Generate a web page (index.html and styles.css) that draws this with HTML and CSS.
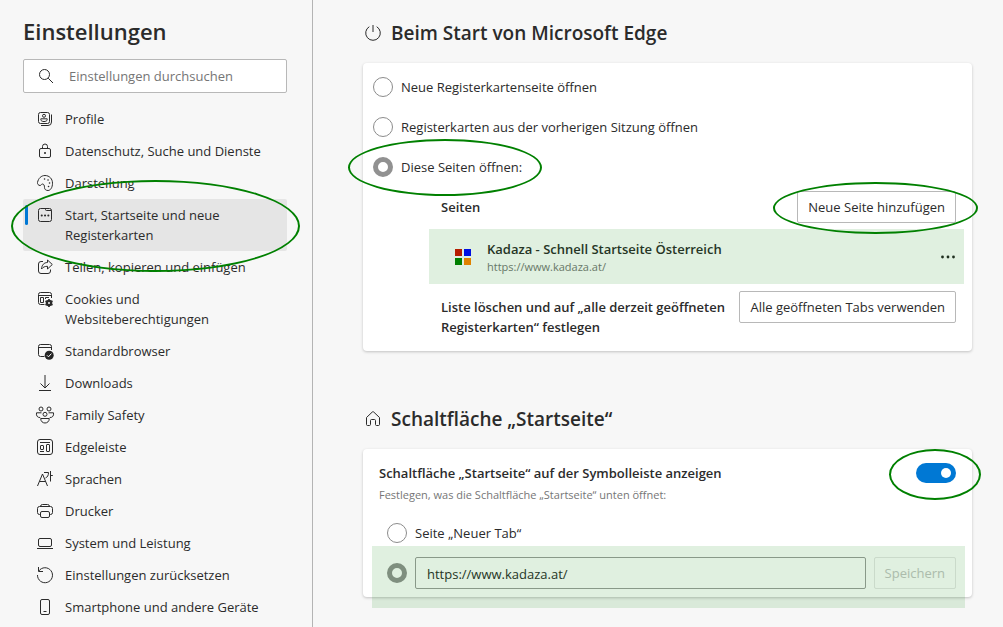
FILE: index.html
```html
<!DOCTYPE html>
<html lang="de">
<head>
<meta charset="utf-8">
<meta name="viewport" content="width=device-width, initial-scale=1">
<title>Einstellungen</title>
<link rel="stylesheet" href="styles.css">
</head>
<body>
<div class="layout">
  <aside class="sidebar">
    <h1 class="sidebar-title">Einstellungen</h1>
    <div class="search">
      <svg class="icon" viewBox="0 0 16 16" aria-hidden="true"><circle cx="6.5" cy="6.5" r="5"/><path d="M10.200 10.200 15 15"/></svg>
      <input class="search-input" type="search" placeholder="Einstellungen durchsuchen" aria-label="Einstellungen durchsuchen">
    </div>
    <nav class="nav">
      <a class="nav-item" href="#"><svg class="icon" viewBox="0 0 16 16" aria-hidden="true"><rect x="1.500" y="1.500" width="11" height="11" rx="2"/><circle cx="7" cy="4.800" r="1.500"/><path d="M3.800 7.800h6.400v.8c0 2.600-6.400 2.600-6.400 0zM14.500 3.500v7.500a3.500 3.500 0 0 1-3.500 3.500H4"/></svg><span>Profile</span></a>
      <a class="nav-item" href="#"><svg class="icon" viewBox="0 0 16 16" aria-hidden="true"><rect x="2.500" y="5.500" width="11" height="9" rx="1.500"/><path d="M5.500 5.500v-2a2.500 2.500 0 0 1 5 0v2"/><circle class="solid" cx="8" cy="10" r="1"/></svg><span>Datenschutz, Suche und Dienste</span></a>
      <a class="nav-item" href="#"><svg class="icon" viewBox="0 0 16 16" aria-hidden="true"><path d="M.5 7.500C1.300 3.300 4.300.5 8 .5c4.500 0 7.500 3.500 7.500 7.700 0 4.300-2 7.300-4.500 7.300-2.200 0-3.500-1.200-3.500-3 0-2-.6-3.500-2-3.500-1.200 0-1.200 1.500-2.500 1.500C1.500 10.500.2 9 .5 7.500z"/><path class="dots dots-small" d="M7.500 4h.1M11 5h.1M12.500 8h.1M11.500 11.500h.1"/></svg><span>Darstellung</span></a>
      <a class="nav-item nav-item-active" href="#" aria-current="page"><svg class="icon" viewBox="0 0 16 16" aria-hidden="true"><rect x="1.500" y="1.500" width="13" height="13" rx="2"/><path d="M8.500 1.500v1a1 1 0 0 0 1 1h5"/><path class="dots" d="M4.700 8.500h.1M8 8.500h.1M11.300 8.500h.1"/></svg><span>Start, Startseite und neue Registerkarten</span><span class="ring ring-nav"></span></a>
      <a class="nav-item" href="#"><svg class="icon" viewBox="0 0 16 16" aria-hidden="true"><path d="M6 2.500H4A2.500 2.500 0 0 0 1.500 5v7A2.500 2.500 0 0 0 4 14.500h7a2.500 2.500 0 0 0 2.500-2.500v-1.500"/><path d="M10.500 1v2.500C7 3.500 4.800 6 4.500 10c1.500-2 3.500-2.700 6-2.700V10L15.300 5.500z"/></svg><span>Teilen, kopieren und einfügen</span></a>
      <a class="nav-item" href="#"><svg class="icon" viewBox="0 0 16 16" aria-hidden="true"><path d="M7.500 13.500h-4a2 2 0 0 1-2-2v-8a2 2 0 0 1 2-2h9a2 2 0 0 1 2 2V7M1.500 4.500h13M3.500 6.500h3v5h-3zM8.500 8V6.500H12"/><circle cx="12" cy="12" r="2.200" stroke-width="2.200"/><path class="cog" d="M12 8v8M8.500 10l7 4M8.500 14l7-4"/><circle class="hole" cx="12" cy="12" r="1"/></svg><span>Cookies und Websiteberechtigungen</span></a>
      <a class="nav-item" href="#"><svg class="icon" viewBox="0 0 16 16" aria-hidden="true"><path d="M7.500 13.500h-4a2 2 0 0 1-2-2v-8a2 2 0 0 1 2-2h9a2 2 0 0 1 2 2V7M1.500 4.500h13"/><circle class="solid" cx="12.200" cy="12.200" r="4.500"/><path class="check" d="m10 12.300 1.500 1.500 2.900-3.200"/></svg><span>Standardbrowser</span></a>
      <a class="nav-item" href="#"><svg class="icon" viewBox="0 0 16 16" aria-hidden="true"><path d="M8 0v13M3.500 8.500 8 13l4.500-4.500M2 15.500h12"/></svg><span>Downloads</span></a>
      <a class="nav-item" href="#"><svg class="icon" viewBox="0 0 16 16" aria-hidden="true"><circle cx="4" cy="2" r="2"/><circle cx="12" cy="2" r="2"/><circle cx="8" cy="7.300" r="2"/><path d="M4.500 5.800H-.5c-.6 3 1.200 5 3.700 4.700M11.500 5.800h5c.6 3-1.200 5-3.700 4.700M3.700 11.500h8.600c0 6-8.600 6-8.600 0z"/></svg><span>Family Safety</span></a>
      <a class="nav-item" href="#"><svg class="icon" viewBox="0 0 16 16" aria-hidden="true"><rect x=".5" y=".5" width="15" height="15" rx="2.500"/><path d="M3 3.500h10"/><rect x="3.500" y="6.500" width="3" height="4" rx=".5"/><rect x="9.500" y="5.500" width="3" height="7" rx=".5"/><path d="M3 12.500h4"/></svg><span>Edgeleiste</span></a>
      <a class="nav-item" href="#"><svg class="icon" viewBox="0 0 16 16" aria-hidden="true"><path d="M.5 15 5.500 3l5 12M2.500 10.500h6M7 1.500h4.500c0 3-1 4.500-3 5.500M13.500 0v10.500M13.500 4.500h2.300"/></svg><span>Sprachen</span></a>
      <a class="nav-item" href="#"><svg class="icon" viewBox="0 0 16 16" aria-hidden="true"><path d="M3.500 11.500h-1a2 2 0 0 1-2-2v-4a2 2 0 0 1 2-2h11a2 2 0 0 1 2 2v4a2 2 0 0 1-2 2h-1M3.500 3.500a2 2 0 0 1 2-2h5a2 2 0 0 1 2 2"/><rect x="3.500" y="8.500" width="9" height="6" rx="1.500"/></svg><span>Drucker</span></a>
      <a class="nav-item" href="#"><svg class="icon" viewBox="0 0 16 16" aria-hidden="true"><rect x="1.500" y="3.500" width="13" height="8" rx="1.500"/><path d="M0 13.500h16"/></svg><span>System und Leistung</span></a>
      <a class="nav-item" href="#"><svg class="icon" viewBox="0 0 16 16" aria-hidden="true"><path d="M1.500 0v4.500H6M1.800 4A7.500 7.500 0 1 1 .5 8"/></svg><span>Einstellungen zurücksetzen</span></a>
      <a class="nav-item" href="#"><svg class="icon" viewBox="0 0 16 16" aria-hidden="true"><rect x="3.500" y=".5" width="9" height="15" rx="1.500"/><path d="M6.500 12.500h3"/></svg><span>Smartphone und andere Geräte</span></a>
    </nav>
  </aside>

  <main class="content">
    <section class="section">
      <h2 class="section-title"><svg class="icon" viewBox="0 0 16 16" aria-hidden="true"><path d="M8 0v7M4.300 1.700a7.300 7.300 0 1 0 7.400 0"/></svg>Beim Start von Microsoft Edge</h2>
      <div class="card card-startup">
        <label class="option"><input class="radio" type="radio" name="startup"><span>Neue Registerkartenseite öffnen</span></label>
        <label class="option"><input class="radio" type="radio" name="startup"><span>Registerkarten aus der vorherigen Sitzung öffnen</span></label>
        <label class="option"><input class="radio" type="radio" name="startup" checked><span>Diese Seiten öffnen:</span><span class="ring ring-option"></span></label>
        <div class="row">
          <span class="row-label">Seiten</span>
          <span class="anchor"><button class="button" type="button">Neue Seite hinzufügen</button><span class="ring ring-button"></span></span>
        </div>
        <div class="site">
          <svg class="favicon" viewBox="0 0 16 16" aria-hidden="true"><path fill="#d01000" d="M0 0h7v7H0z"/><path fill="#0000ff" d="M9 0h7v7H9z"/><path fill="#008000" d="M0 9h7v7H0z"/><path fill="#ff8200" d="M9 9h7v7H9z"/></svg>
          <div class="site-text">
            <div class="site-name">Kadaza - Schnell Startseite Österreich</div>
            <div class="site-url">https://www.kadaza.at/</div>
          </div>
          <button class="more" type="button" aria-label="Weitere Aktionen"><svg class="icon" viewBox="0 0 16 16" aria-hidden="true"><circle class="solid" cx="2.500" cy="8" r="1.400"/><circle class="solid" cx="8" cy="8" r="1.400"/><circle class="solid" cx="13.500" cy="8" r="1.400"/></svg></button>
        </div>
        <div class="row row-tabs">
          <span class="row-label">Liste löschen und auf „alle derzeit geöffneten Registerkarten“ festlegen</span>
          <button class="button" type="button">Alle geöffneten Tabs verwenden</button>
        </div>
      </div>
    </section>

    <section class="section">
      <h2 class="section-title"><svg class="icon" viewBox="0 0 16 16" aria-hidden="true"><path d="M1.500 6.500v7c0 .6.400 1 1 1h2c.6 0 1-.4 1-1v-4c0-.6.400-1 1-1h3c.6 0 1 .4 1 1v4c0 .6.400 1 1 1h2c.6 0 1-.4 1-1v-7L8.700 1a1 1 0 0 0-1.400 0z"/></svg>Schaltfläche „Startseite“</h2>
      <div class="card card-home">
        <div class="setting">
          <div>
            <label class="setting-name" for="home-toggle">Schaltfläche „Startseite“ auf der Symbolleiste anzeigen</label>
            <p class="setting-hint">Festlegen, was die Schaltfläche „Startseite“ unten öffnet:</p>
          </div>
          <span class="anchor"><input class="toggle" id="home-toggle" type="checkbox" role="switch" checked><span class="ring ring-toggle"></span></span>
        </div>
        <label class="option option-home"><input class="radio" type="radio" name="home"><span>Seite „Neuer Tab“</span></label>
        <div class="home-url">
          <input class="radio" type="radio" name="home" aria-label="URL öffnen" checked>
          <input class="url-input" type="text" value="https://www.kadaza.at/" aria-label="URL eingeben">
          <button class="button" type="button" disabled>Speichern</button>
        </div>
      </div>
    </section>
  </main>
</div>
</body>
</html>
```
FILE: styles.css
```css
* {
  box-sizing: border-box;
}

body {
  margin: 0;
  background: #f7f7f7;
  color: #2b2b2b;
  font: 13px/20px "Segoe UI", "Open Sans", "Noto Sans", sans-serif;
}

h1, h2, p {
  margin: 0;
}

button, input {
  font: inherit;
  color: inherit;
  margin: 0;
}

.layout {
  display: flex;
  min-height: 100vh;
}

.sidebar {
  flex: 0 0 313px;
  padding: 15px 25px 4px 23px;
  border-right: 1px solid #b4b4b4;
}

.sidebar-title {
  font-size: 22px;
  line-height: 32px;
  font-weight: 600;
}

.search {
  display: flex;
  align-items: center;
  gap: 15px;
  height: 34px;
  margin-top: 12px;
  padding-left: 14px;
  border: 1px solid #b8b8b8;
  border-radius: 2px;
  background: #fff;
}

.search-input {
  flex: 1;
  min-width: 0;
  padding: 0;
  border: 0;
  outline: 0;
  background: none;
  appearance: none;
}

.search-input::placeholder {
  color: #757575;
}

.icon {
  flex: none;
  width: 16px;
  height: 16px;
  fill: none;
  stroke: #2b2b2b;
  stroke-width: 1;
  overflow: visible;
}

.icon .solid {
  fill: #242424;
  stroke: none;
}

.icon .hole {
  fill: #f7f7f7;
  stroke: none;
}

.icon .dots {
  stroke-width: 2;
  stroke-linecap: round;
}

.icon .dots-small {
  stroke-width: 1.5;
}

.icon .cog {
  stroke-width: 1.7;
}

.icon .check {
  stroke: #fff;
}

.nav {
  display: flex;
  flex-direction: column;
  margin-top: 10px;
}

.nav-item {
  position: relative;
  display: flex;
  align-items: flex-start;
  gap: 12px;
  padding: 6px 14px;
  color: inherit;
  text-decoration: none;
}

.nav-item .icon {
  margin-top: 2px;
}

.nav-item-active {
  background: #e5e5e5;
  border-radius: 2px;
}

.nav-item-active::before {
  content: "";
  position: absolute;
  left: 2px;
  top: 6px;
  width: 3px;
  height: 20px;
  border-radius: 2px;
  background: #0078d4;
}

.ring {
  position: absolute;
  z-index: 2;
  border: 2px solid #008000;
  border-radius: 50%;
  pointer-events: none;
}

.ring-nav {
  inset: -19px -13px -21px -12px;
}

.ring-option {
  inset: -8px -20px -9px -25px;
}

.ring-button {
  inset: -9px -22px -11px -24px;
}

.ring-toggle {
  inset: -14px -25px -17px -27px;
}

.anchor {
  position: relative;
  display: flex;
  flex: none;
}

.content {
  flex: 1;
  min-width: 0;
  display: flex;
  flex-direction: column;
  gap: 54px;
  padding: 19px 31px 19px 50px;
}

.section-title {
  display: flex;
  align-items: center;
  gap: 10px;
  margin-bottom: 16px;
  padding-left: 2px;
  font-size: 19px;
  line-height: 28px;
  font-weight: 600;
}

.card {
  display: flex;
  flex-direction: column;
  background: #fff;
  border-radius: 4px;
  box-shadow: 0 1px 3px rgba(0, 0, 0, 0.22);
}

.card-startup {
  padding: 4px 8px 14px 10px;
}

.option {
  position: relative;
  display: flex;
  align-items: center;
  align-self: flex-start;
  gap: 8px;
  height: 40px;
}

.radio {
  flex: none;
  width: 20px;
  height: 20px;
  border: 1px solid #8c8c8c;
  border-radius: 50%;
  background: #fff;
  appearance: none;
}

.radio:checked {
  border: 5px solid #919191;
}

.row {
  display: flex;
  align-items: flex-start;
  justify-content: space-between;
  gap: 10px;
  padding: 4px 8px 6px 68px;
}

.row-label {
  padding-top: 6px;
  font-weight: 600;
}

.row-tabs {
  padding-top: 7px;
  padding-bottom: 0;
}

.button {
  flex: none;
  height: 32px;
  padding: 0 10px;
  border: 1px solid #b8b8b8;
  border-radius: 2px;
  background: #fff;
  white-space: nowrap;
}

.button:disabled {
  border-color: #e6e6e6;
  color: #c4c4c4;
}

.site,
.home-url {
  position: relative;
}

.site::after,
.home-url::after {
  content: "";
  position: absolute;
  inset: 0;
  background: rgba(0, 128, 0, 0.12);
  pointer-events: none;
}

.site {
  display: flex;
  align-items: center;
  gap: 16px;
  height: 55px;
  margin-left: 56px;
  padding: 0 8px 0 26px;
}

.favicon {
  flex: none;
  width: 16px;
  height: 16px;
}

.site-text {
  flex: 1;
  min-width: 0;
}

.site-name {
  font-weight: 600;
}

.site-url,
.setting-hint {
  font-size: 11px;
  line-height: 16px;
  color: #767676;
}

.more {
  display: flex;
  padding: 0;
  border: 0;
  background: none;
}

.card-home {
  padding: 14px 16px 8px;
}

.setting {
  display: flex;
  align-items: flex-start;
  justify-content: space-between;
}

.setting-name {
  display: block;
  font-weight: 600;
}

.setting-hint {
  margin-top: 4px;
}

.toggle {
  width: 40px;
  height: 20px;
  padding: 5px;
  border-radius: 10px;
  background: #0078d4;
  appearance: none;
}

.toggle::before {
  content: "";
  display: block;
  width: 10px;
  height: 10px;
  margin-left: auto;
  border-radius: 50%;
  background: #fff;
}

.option-home {
  margin: 10px 0 4px 8px;
}

.home-url {
  display: flex;
  align-items: center;
  gap: 8px;
  padding-left: 8px;
}

.home-url::after {
  inset: -11px -9px -19px -7px;
}

.url-input {
  flex: 1;
  min-width: 0;
  height: 32px;
  padding: 2px 11px 0;
  border: 1px solid #9c9c9c;
  border-radius: 2px;
  background: #fff;
}
```
